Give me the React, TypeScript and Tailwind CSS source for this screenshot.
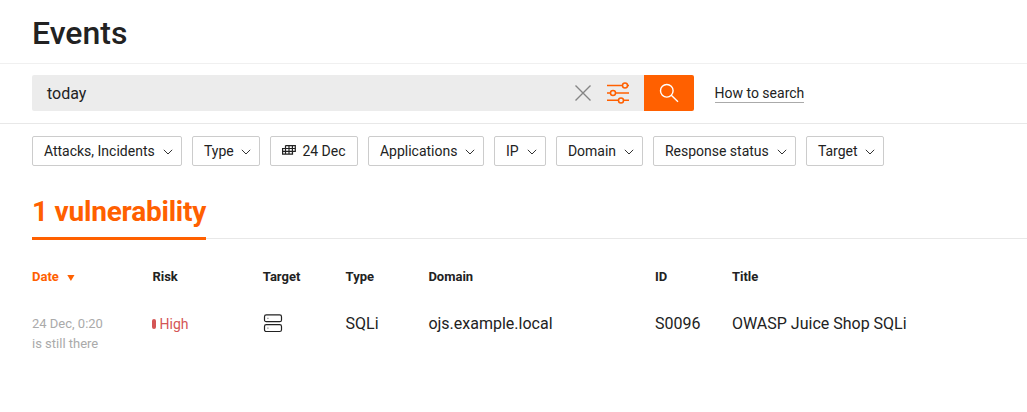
import React from "react";

const filters: { label: string; width: string; calendar?: boolean }[] = [
  { label: "Attacks, Incidents", width: "w-[150px]" },
  { label: "Type", width: "w-[68px]" },
  { label: "24 Dec", width: "w-[88px]", calendar: true },
  { label: "Applications", width: "w-[116px]" },
  { label: "IP", width: "w-[52px]" },
  { label: "Domain", width: "w-[87px]" },
  { label: "Response status", width: "w-[143px]" },
  { label: "Target", width: "w-[78px]" },
];

const columns = "grid grid-cols-[120.4px_110.4px_82.8px_82.8px_226.6px_77px_1fr]";

function Chevron() {
  return (
    <svg width="10" height="6" viewBox="0 0 10 6" fill="none" stroke="#333" strokeWidth="1" className="mt-0.5 shrink-0">
      <path d="M0.8 0.8L5 5L9.2 0.8" />
    </svg>
  );
}

function CalendarGrid() {
  return (
    <svg width="14" height="10" viewBox="0 0 14 10" fill="none" stroke="#222" strokeWidth="1.2" className="-mt-0.5 mr-[6.5px] shrink-0">
      <path d="M3.5 0.6H13.3V6.3H10.5V9.2H0.6V3.5H13.3M3.5 0.6V9.2M7 0.6V9.2M10.4 0.6V9.2M0.6 6.3H10.5" />
    </svg>
  );
}

function SearchBar() {
  return (
    <div className="flex h-9 w-[662px] overflow-hidden rounded-xs">
      <div className="flex flex-1 items-center bg-[#ececec] pl-[15px]">
        <span className="flex-1 pt-0.5 text-base leading-9">today</span>
        <svg width="16" height="16" viewBox="0 0 16 16" fill="none" stroke="#858585" strokeWidth="1.4" className="mr-4">
          <path d="M0.5 0.5L15.5 15.5M15.5 0.5L0.5 15.5" />
        </svg>
        <svg width="22" height="22" viewBox="0 0 22 22" fill="#ececec" stroke="#ff6000" strokeWidth="1.5" className="mr-[15px]">
          <path d="M0 3.5H22M0 11H22M0 18.2H22" />
          <circle cx="18" cy="3.5" r="2.5" />
          <circle cx="6" cy="11" r="2.5" />
          <circle cx="14" cy="18.5" r="2.5" />
        </svg>
      </div>
      <div className="flex w-[50px] items-center justify-center bg-[#ff6000]">
        <svg width="20" height="20" viewBox="0 0 20 20" fill="none" stroke="white" strokeWidth="1.4">
          <circle cx="7.8" cy="7.8" r="6.3" />
          <path d="M12.3 12.3L19 18.7" />
        </svg>
      </div>
    </div>
  );
}

export default function App() {
  return (
    <div className="h-[412px] w-full overflow-hidden bg-white font-['Roboto',sans-serif] text-[#222]">
      <header className="h-16 border-b border-[#f0f0f0] pl-8 pt-3">
        <h1 className="text-[32px] font-medium leading-[42px]">Events</h1>
      </header>

      <section className="flex h-[60px] items-start border-b border-[#e8e8e8] pl-8 pt-[11px]">
        <SearchBar />
        <a className="ml-[20.5px] mt-[10px] h-[18px] border-b border-[#aaa] text-sm leading-4">How to search</a>
      </section>

      <nav className="flex gap-[10px] pl-8 pt-3">
        {filters.map((f) => (
          <button
            key={f.label}
            className={`flex h-[30px] items-center justify-between whitespace-nowrap rounded-xs border border-[#ccc] pl-[10.9px] pr-2 text-sm ${f.width}`}
          >
            <span className="flex items-center">
              {f.calendar && <CalendarGrid />}
              {f.label}
            </span>
            {!f.calendar && <Chevron />}
          </button>
        ))}
      </nav>

      <section className="flex h-[74px] pl-8">
        <h2 className="h-[74px] w-[174px] whitespace-nowrap border-b-3 border-[#ff6000] pt-[26px] text-[28px] font-bold leading-10 tracking-[-0.22px] text-[#ff6000]">
          1 vulnerability
        </h2>
        <div className="h-[73px] flex-1 border-b border-[#e8e8e8]" />
      </section>

      <main className="pl-8 pt-[27px]">
        <div className={`${columns} text-[13px] font-bold leading-5`}>
          <span className="flex items-center text-[#ff6000]">
            Date
            <svg width="8" height="6" viewBox="0 0 8 6" fill="#ff6000" className="ml-2 mt-px">
              <path d="M0.3 0H7.5L3.9 6Z" />
            </svg>
          </span>
          <span>Risk</span>
          <span>Target</span>
          <span>Type</span>
          <span>Domain</span>
          <span>ID</span>
          <span>Title</span>
        </div>
        <div className={`${columns} mt-[27px] text-base leading-5`}>
          <span className="text-[13px] leading-5 text-[#aaa]">
            24 Dec, 0:20
            <br />
            is still there
          </span>
          <span className="flex h-5 items-center text-sm text-[#d45555]">
            <i className="-ml-[0.4px] mr-[3.6px] h-[10px] w-1 rounded-xs bg-[#d45555]" />
            <span className="leading-5">High</span>
          </span>
          <svg width="20" height="20" viewBox="0 0 20 20" fill="none" stroke="#222" strokeWidth="1.2">
            <rect x="1.5" y="0.9" width="17" height="6.8" rx="1.8" />
            <rect x="1.5" y="10.7" width="17" height="6.8" rx="1.8" />
            <path d="M4.3 4.4H5.5M4.3 14.2H5.5" stroke="#888" strokeWidth="1.2" />
          </svg>
          <span>SQLi</span>
          <span>ojs.example.local</span>
          <span>S0096</span>
          <span>OWASP Juice Shop SQLi</span>
        </div>
      </main>
    </div>
  );
}
